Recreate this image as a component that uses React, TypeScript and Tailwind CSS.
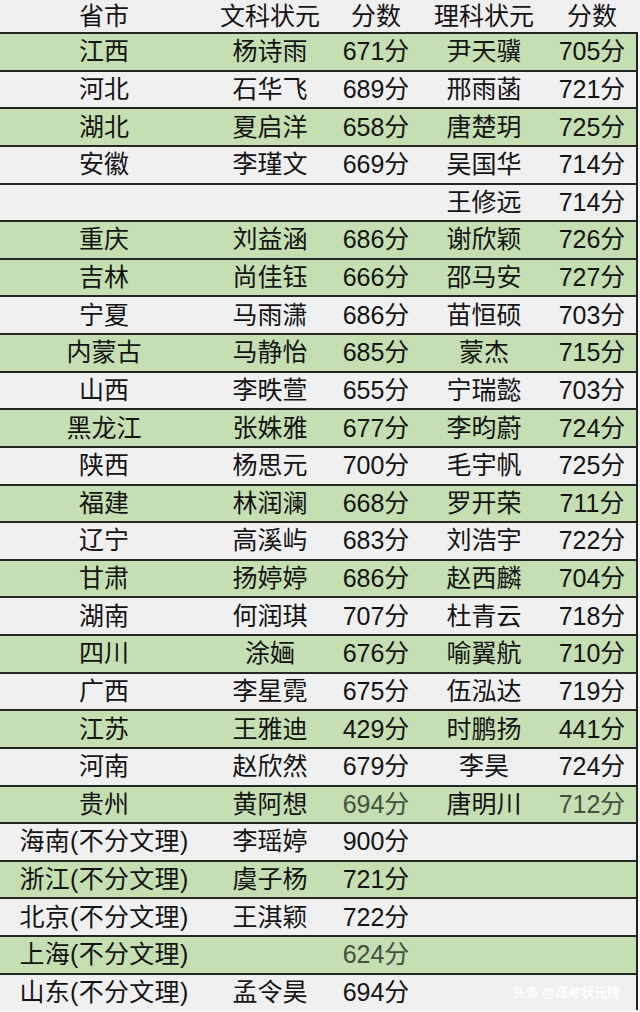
type Row = {
  prov: string;
  wen: string;
  wenScore: string;
  li: string;
  liScore: string;
  green: boolean;
  dim?: boolean;
};

const rows: Row[] = [
  { prov: '江西', wen: '杨诗雨', wenScore: '671分', li: '尹天骥', liScore: '705分', green: true },
  { prov: '河北', wen: '石华飞', wenScore: '689分', li: '邢雨菡', liScore: '721分', green: false },
  { prov: '湖北', wen: '夏启洋', wenScore: '658分', li: '唐楚玥', liScore: '725分', green: true },
  { prov: '安徽', wen: '李瑾文', wenScore: '669分', li: '吴国华', liScore: '714分', green: false },
  { prov: '', wen: '', wenScore: '', li: '王修远', liScore: '714分', green: false },
  { prov: '重庆', wen: '刘益涵', wenScore: '686分', li: '谢欣颖', liScore: '726分', green: true },
  { prov: '吉林', wen: '尚佳钰', wenScore: '666分', li: '邵马安', liScore: '727分', green: true },
  { prov: '宁夏', wen: '马雨潇', wenScore: '686分', li: '苗恒硕', liScore: '703分', green: false },
  { prov: '内蒙古', wen: '马静怡', wenScore: '685分', li: '蒙杰', liScore: '715分', green: true },
  { prov: '山西', wen: '李昳萱', wenScore: '655分', li: '宁瑞懿', liScore: '703分', green: false },
  { prov: '黑龙江', wen: '张姝雅', wenScore: '677分', li: '李昀蔚', liScore: '724分', green: true },
  { prov: '陕西', wen: '杨思元', wenScore: '700分', li: '毛宇帆', liScore: '725分', green: false },
  { prov: '福建', wen: '林润澜', wenScore: '668分', li: '罗开荣', liScore: '711分', green: true },
  { prov: '辽宁', wen: '高溪屿', wenScore: '683分', li: '刘浩宇', liScore: '722分', green: false },
  { prov: '甘肃', wen: '扬婷婷', wenScore: '686分', li: '赵西麟', liScore: '704分', green: true },
  { prov: '湖南', wen: '何润琪', wenScore: '707分', li: '杜青云', liScore: '718分', green: false },
  { prov: '四川', wen: '涂婳', wenScore: '676分', li: '喻翼航', liScore: '710分', green: true },
  { prov: '广西', wen: '李星霓', wenScore: '675分', li: '伍泓达', liScore: '719分', green: false },
  { prov: '江苏', wen: '王雅迪', wenScore: '429分', li: '时鹏扬', liScore: '441分', green: true },
  { prov: '河南', wen: '赵欣然', wenScore: '679分', li: '李昊', liScore: '724分', green: false },
  { prov: '贵州', wen: '黄阿想', wenScore: '694分', li: '唐明川', liScore: '712分', green: true, dim: true },
  { prov: '海南(不分文理)', wen: '李瑶婷', wenScore: '900分', li: '', liScore: '', green: false },
  { prov: '浙江(不分文理)', wen: '虞子杨', wenScore: '721分', li: '', liScore: '', green: true },
  { prov: '北京(不分文理)', wen: '王淇颖', wenScore: '722分', li: '', liScore: '', green: false },
  { prov: '上海(不分文理)', wen: '', wenScore: '624分', li: '', liScore: '', green: true, dim: true },
  { prov: '山东(不分文理)', wen: '孟令昊', wenScore: '694分', li: '', liScore: '', green: false },
];

const cols = 'grid grid-cols-[208px_124px_88px_128px_88px] items-center text-center whitespace-nowrap';

export default function App() {
  return (
    <div
      className="w-[640px] h-[1012px] overflow-hidden bg-[#f7f7f7] text-[25px] leading-none text-[#141414]"
      style={{ fontFamily: '"Liberation Sans", "Noto Sans CJK SC", sans-serif' }}
    >
      {/* 表头 */}
      <div className={`${cols} h-[32px] bg-[#efefef] w-[640px]`}>
        <span>省市</span>
        <span>文科状元</span>
        <span>分数</span>
        <span>理科状元</span>
        <span>分数</span>
      </div>

      <div className="w-[638px] border-r-2 border-[#222]">
        {rows.map((r, i) => (
          <div
            key={i}
            className={`${cols} relative h-[37.64px] border-t-2 border-[#262626] ${
              r.green ? 'bg-[#c5dfb2]' : 'bg-[#f0f0f1]'
            }`}
          >
            <span className={i > 20 ? 'tracking-[0.3px]' : ''}>{r.prov}</span>
            <span>{r.wen}</span>
            <span className={r.dim ? 'text-[#415141]' : ''}>{r.wenScore}</span>
            <span>{r.li}</span>
            <span className={r.dim ? 'text-[#415141]' : ''}>{r.liScore}</span>
            {i === rows.length - 1 && (
              <span className="absolute right-[16px] top-[11px] text-[13px] font-bold text-white/90">
                头条 @高考状元榜
              </span>
            )}
          </div>
        ))}
      </div>
    </div>
  );
}
